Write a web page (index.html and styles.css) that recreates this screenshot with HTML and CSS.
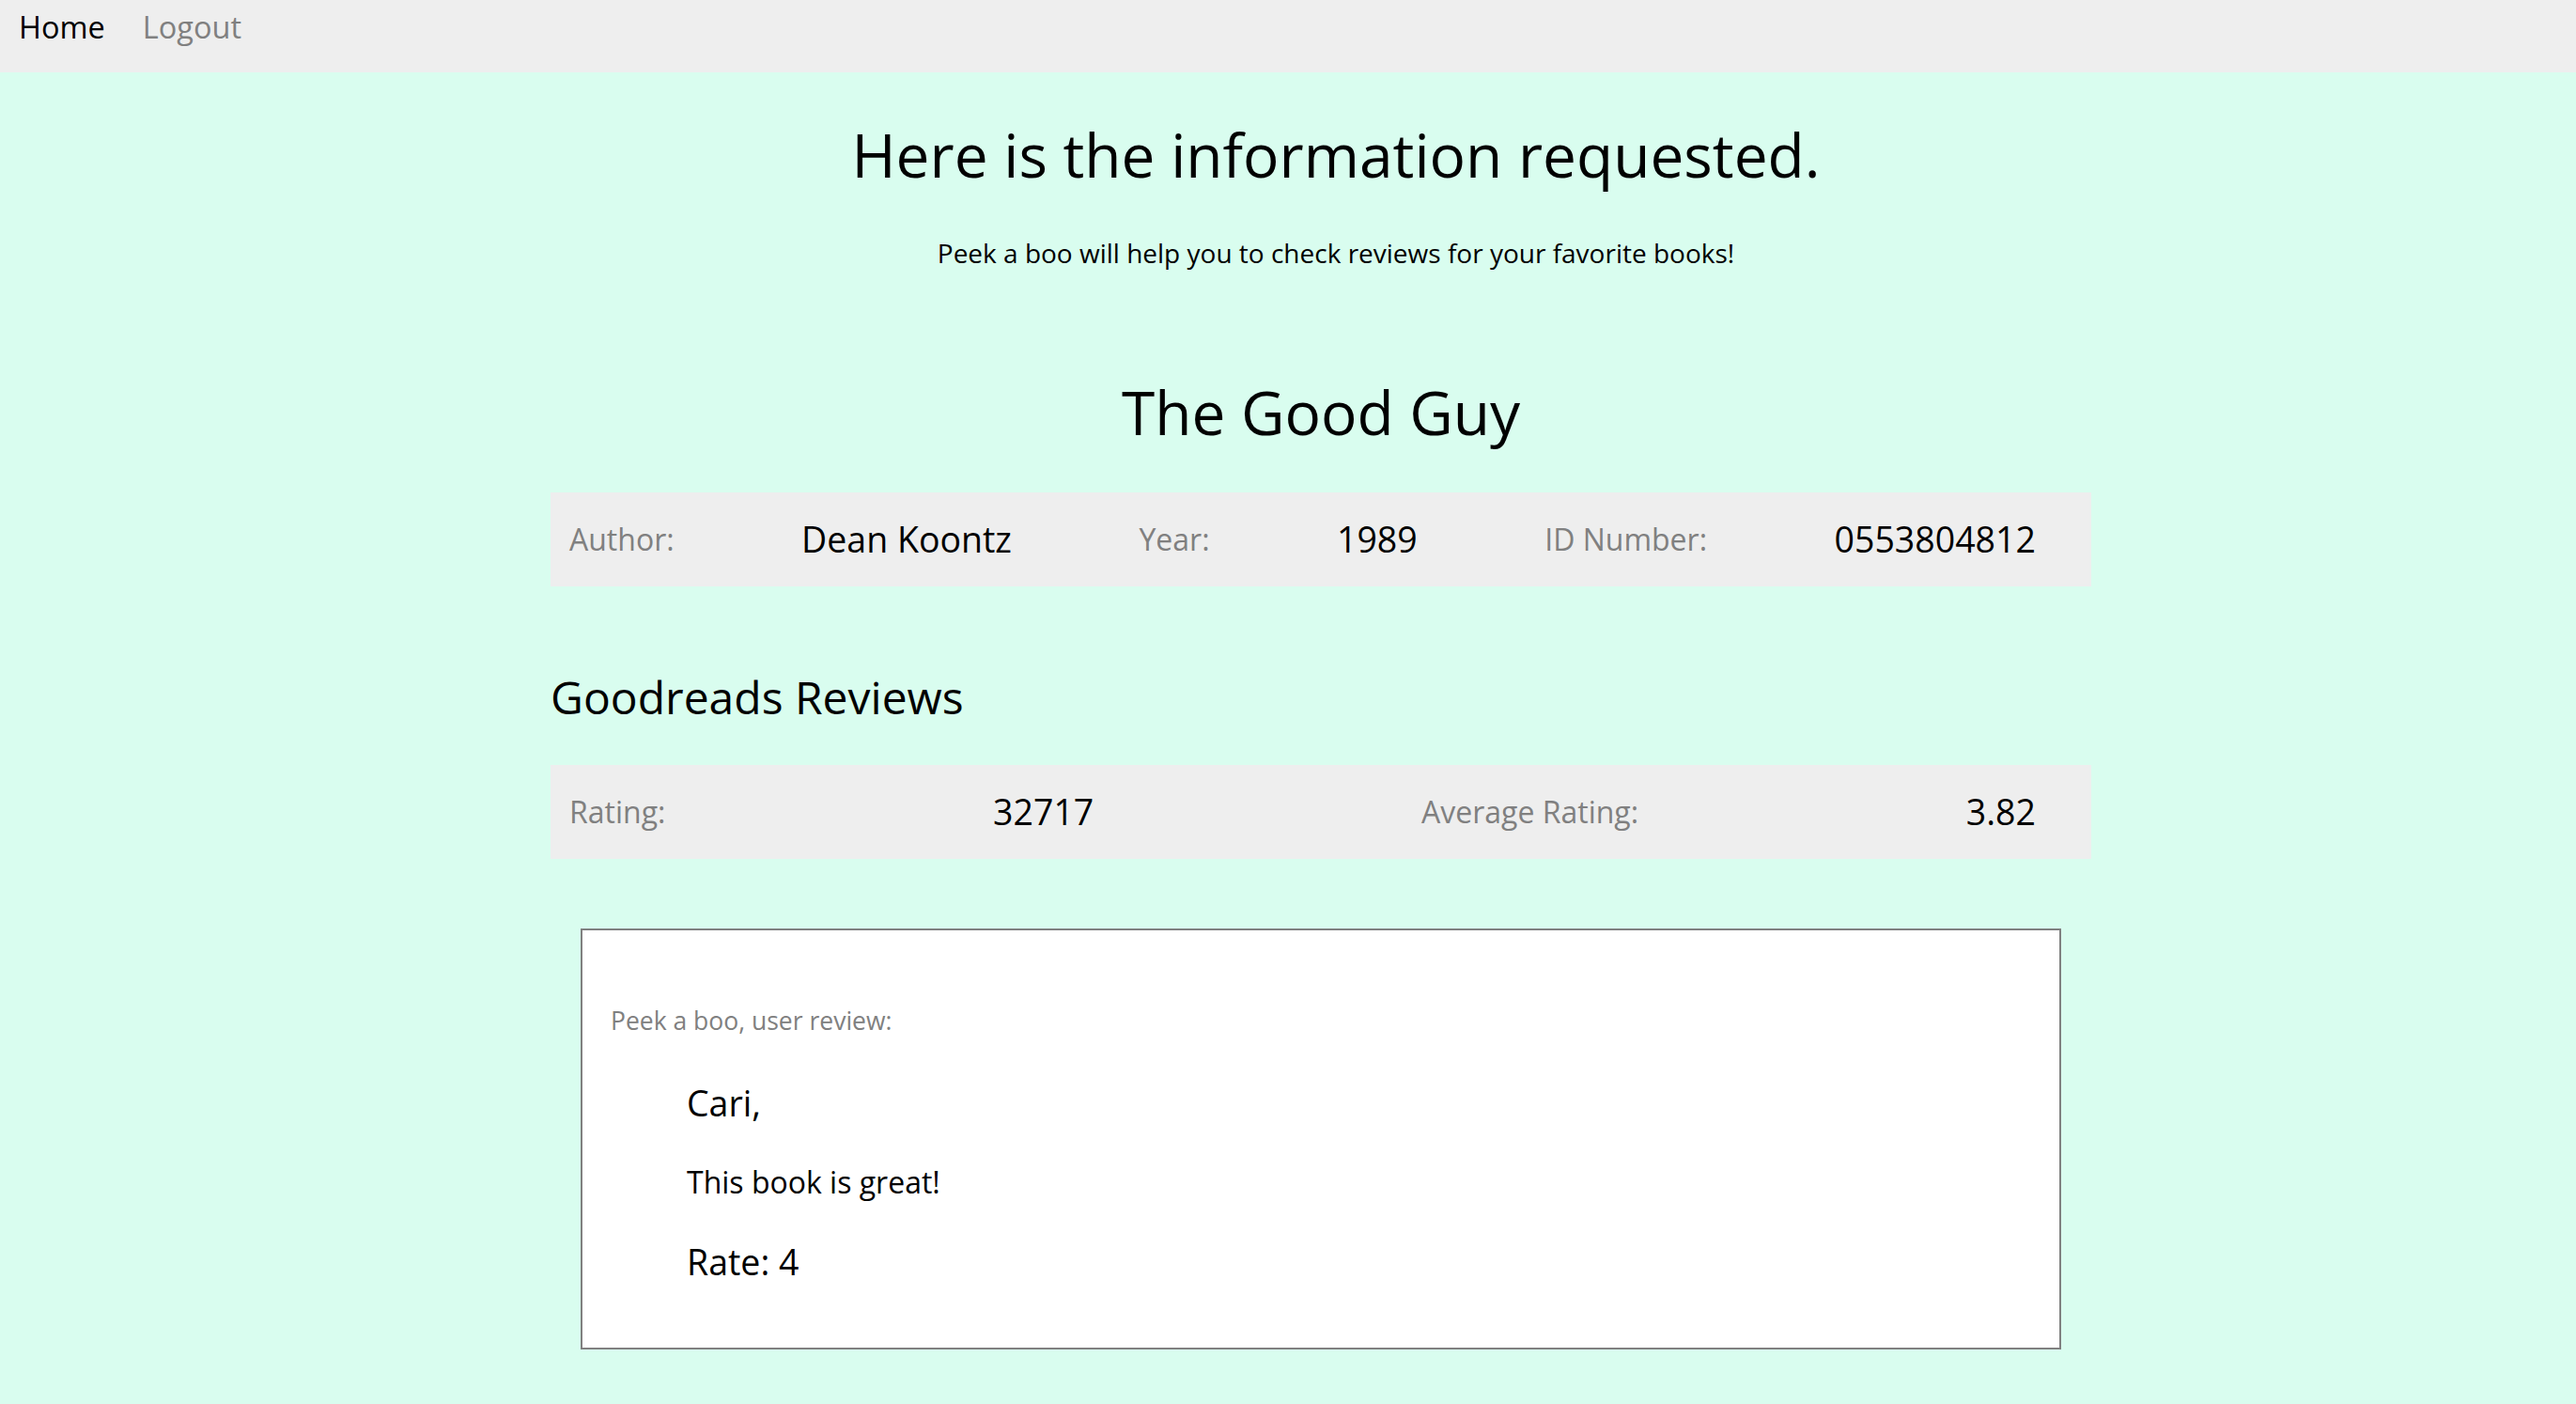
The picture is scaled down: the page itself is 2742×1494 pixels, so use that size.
FILE: index.html
```html
<!DOCTYPE html>
<html lang="en">
<head>
<meta charset="utf-8">
<title>Peek a boo</title>
<link rel="stylesheet" href="styles.css">
</head>
<body>
  <nav class="topnav">
    <a class="nav-link nav-active" href="#">Home</a>
    <a class="nav-link nav-muted" href="#">Logout</a>
  </nav>
  <div class="page">
    <main class="container">
      <header class="intro">
        <h1 class="intro-title">Here is the information requested.</h1>
        <p class="intro-sub">Peek a boo will help you to check reviews for your favorite books!</p>
      </header>

      <h1 class="book-title">The Good Guy</h1>
      <div class="info-bar">
        <span class="info-label">Author:</span>
        <span class="info-value">Dean Koontz</span>
        <span class="info-label">Year:</span>
        <span class="info-value">1989</span>
        <span class="info-label">ID Number:</span>
        <span class="info-value">0553804812</span>
      </div>

      <h3 class="section-title">Goodreads Reviews</h3>
      <div class="info-bar info-bar-second">
        <span class="info-label">Rating:</span>
        <span class="info-value">32717</span>
        <span class="info-label">Average Rating:</span>
        <span class="info-value">3.82</span>
      </div>

      <section class="review-card">
        <p class="review-caption">Peek a boo, user review:</p>
        <div class="review-body">
          <h4 class="review-author">Cari,</h4>
          <p class="review-text">This book is great!</p>
          <h4 class="review-rate">Rate: 4</h4>
        </div>
      </section>
    </main>
  </div>
</body>
</html>
```

FILE: styles.css
```css
* {
  box-sizing: border-box;
}

html, body {
  margin: 0;
  padding: 0;
}

body {
  font-family: "Open Sans", "Noto Sans", sans-serif;
  background: #d9fdef;
  color: #000;
  min-height: 100vh;
}

.topnav {
  display: flex;
  align-items: flex-start;
  height: 77px;
  padding: 7px 0 0 20px;
  background: #eeeeee;
  gap: 40px;
}

.nav-link {
  font-size: 32.5px;
  line-height: 44px;
  text-decoration: none;
}

.nav-active {
  color: #000;
}

.nav-muted {
  color: #808080;
}

.page {
  padding-left: 70px;
}

.container {
  max-width: 1640px;
  margin: 0 auto;
  padding-bottom: 56px;
}

.intro {
  padding-left: 32px;
  text-align: center;
}

.intro-title {
  margin: 50px 0 0;
  font-size: 64px;
  line-height: 76px;
  font-weight: 400;
}

.intro-sub {
  margin: 46px 0 0;
  font-size: 28px;
  line-height: 40px;
}

.book-title {
  margin: 112px 0 0;
  text-align: center;
  font-size: 64px;
  line-height: 76px;
  font-weight: 400;
}

.info-bar {
  display: flex;
  align-items: center;
  justify-content: space-between;
  height: 100px;
  margin-top: 47px;
  padding: 0 59px 0 20px;
  background: #eeeeee;
}

.info-bar-second {
  margin-top: 42px;
}

.info-label {
  font-size: 32px;
  line-height: 40px;
  color: #808080;
}

.info-value {
  font-size: 37.5px;
  line-height: 44px;
  color: #000;
}

.section-title {
  margin: 88px 0 0;
  font-size: 48px;
  line-height: 60px;
  font-weight: 400;
}

.review-card {
  margin: 74px 32px 0;
  padding: 79px 30px 69px;
  background: #ffffff;
  border: 2px solid #808080;
}

.review-caption {
  margin: 0;
  font-size: 26.5px;
  line-height: 34px;
  color: #808080;
}

.review-body {
  padding-left: 81px;
}

.review-author {
  margin: 49px 0 0;
  font-size: 37.5px;
  line-height: 44px;
  font-weight: 400;
}

.review-text {
  margin: 42px 0 0;
  font-size: 32px;
  line-height: 40px;
}

.review-rate {
  margin: 43px 0 0;
  font-size: 37.5px;
  line-height: 44px;
  font-weight: 400;
}
```
